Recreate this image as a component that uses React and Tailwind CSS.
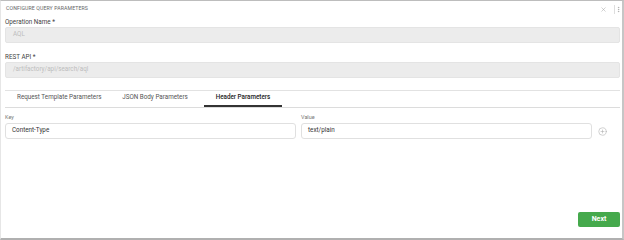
import React, { useState } from "react";
import { X, EllipsisVertical, CirclePlus } from "lucide-react";

// tabs of the query parameter dialog
const TABS = [
  { id: "template", label: "Request Template Parameters", box: "w-[105px] justify-start pl-[12px]" },
  { id: "json", label: "JSON Body Parameters", box: "w-[90px] justify-center" },
  { id: "header", label: "Header Parameters", box: "w-[78px] ml-[4px] justify-center" },
];

function Field({ label, value, className = "" }) {
  return (
    <div className={className}>
      <div className="h-[8px] leading-[8px] text-[6.3px] text-[#444]">{label}</div>
      <div className="mt-[1px] h-[16px] flex items-center px-[7px] bg-[#ececec] border border-[#e4e4e4] rounded-[2px] text-[6.3px] text-[#bdbdbd]">
        {value}
      </div>
    </div>
  );
}

export default function App() {
  const [activeTab, setActiveTab] = useState("header");

  return (
    <div className="w-[624px] h-[240px] bg-white border-t border-t-[#bdbdbd] border-l border-l-[#e6e6e6] border-r-2 border-r-[#c6c6c6] border-b-2 border-b-[#b0b0b0] flex flex-col font-['Roboto',sans-serif]">
      {/* header */}
      <div className="h-[16px] flex items-center justify-between pl-[5px]">
        <span className="text-[5.2px] text-[#666] uppercase tracking-[0.1px]">Configure Query Parameters</span>
        <div className="flex items-center h-full">
          <X size={7} strokeWidth={1.6} className="text-[#9e9e9e]" />
          <div className="w-px h-[9px] bg-[#dedede] ml-[7px]" />
          <EllipsisVertical size={7} strokeWidth={2} className="text-[#9e9e9e]" />
        </div>
      </div>

      <div className="flex-1 flex flex-col pl-[4px] pr-[2px]">
        <Field label="Operation Name *" value="AQL" className="mt-[1px]" />
        <Field label="REST API *" value="/artifactory/api/search/aql" className="mt-[10px]" />

        {/* tabs */}
        <div className="mt-[12px] border-t border-[#e2e2e2] border-b border-b-[#dcdcdc] flex h-[18px]">
          {TABS.map((tab) => (
            <button
              key={tab.id}
              type="button"
              onClick={() => setActiveTab(tab.id)}
              className={`${tab.box} h-full flex items-center whitespace-nowrap text-[6.3px] border-b-2 ${
                activeTab === tab.id
                  ? "border-[#333] text-[#222] font-medium"
                  : "border-transparent text-[#555]"
              }`}
            >
              {tab.label}
            </button>
          ))}
        </div>

        {/* key / value rows */}
        <div className="mt-[5px] flex gap-[5px]">
          <div className="flex-1">
            <div className="h-[9px] leading-[9px] text-[5.5px] text-[#777]">Key</div>
            <div className="mt-[1px] h-[16px] flex items-center px-[6px] border border-[#e0e0e0] rounded-[3px] text-[6.3px] text-[#333]">
              Content-Type
            </div>
          </div>
          <div className="flex-1">
            <div className="h-[9px] leading-[9px] text-[5.5px] text-[#777]">Value</div>
            <div className="mt-[1px] h-[16px] flex items-center px-[6px] border border-[#e0e0e0] rounded-[3px] text-[6.3px] text-[#333]">
              text/plain
            </div>
          </div>
          <div className="w-[23px] flex items-end pb-[3px]">
            <CirclePlus size={9} strokeWidth={1.4} className="ml-[1px] text-[#a8a8a8]" />
          </div>
        </div>

        {/* footer */}
        <div className="mt-auto flex justify-end pb-[11px]">
          <button type="button" className="w-[42px] h-[15px] rounded-[2px] bg-[#45a94c] text-white text-[7px] font-bold">
            Next
          </button>
        </div>
      </div>
    </div>
  );
}
